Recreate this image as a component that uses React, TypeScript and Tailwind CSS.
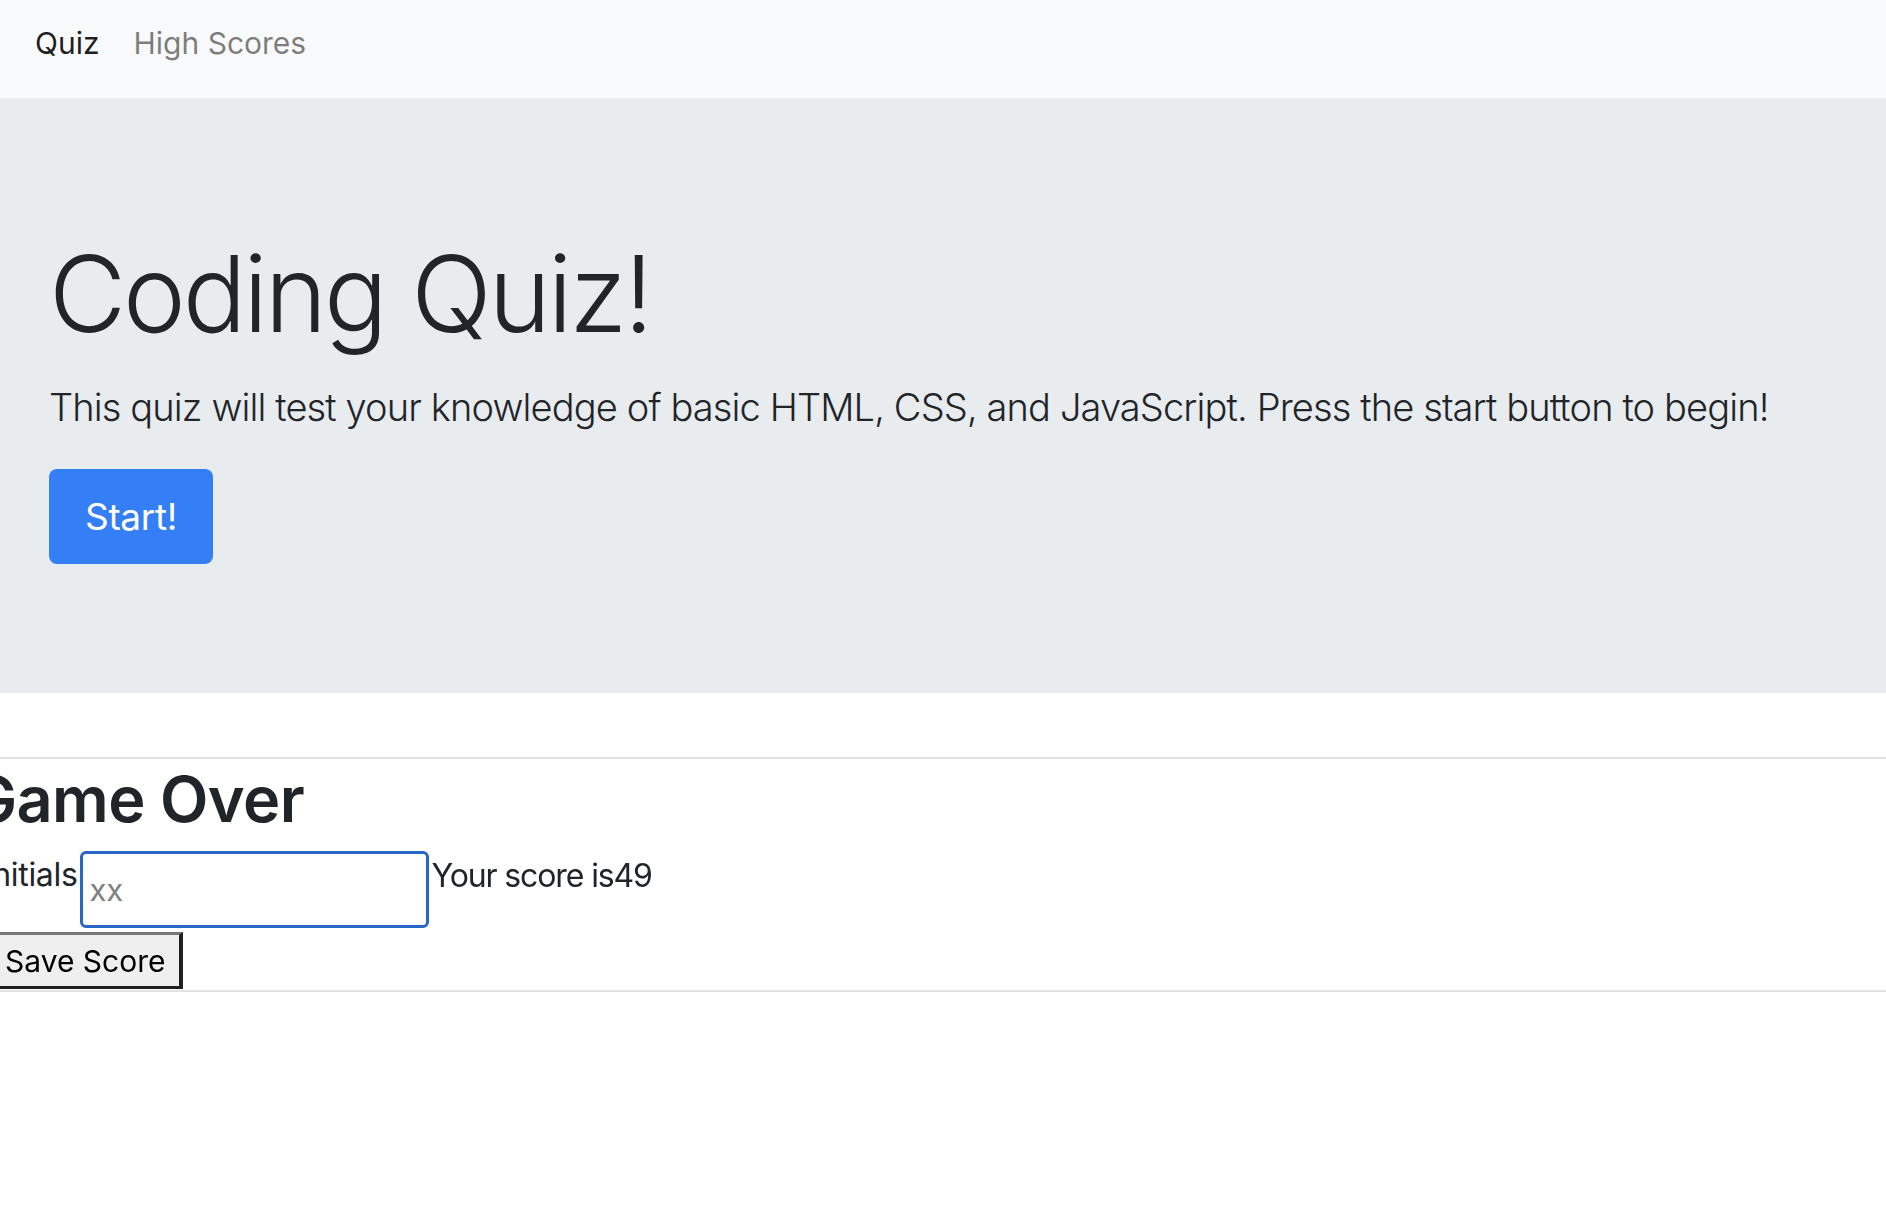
import { useState } from "react";

const font = { fontFamily: "Inter, 'Noto Sans', sans-serif" };

export default function App() {
  const [initials, setInitials] = useState("");

  return (
    <div className="min-h-screen overflow-hidden bg-white text-[#212529]" style={font}>
      {/* Navbar */}
      <nav className="flex h-[98px] items-start gap-[34px] bg-[#f8f9fa] pl-[35px] pt-[25px] text-[30px] leading-[36px]">
        <a href="#quiz" className="text-black/90">
          Quiz
        </a>
        <a href="#scores" className="text-black/50">
          High Scores
        </a>
      </nav>

      {/* Jumbotron */}
      <section className="bg-[#e9ecef] pb-[129px] pl-[49px] pt-[127px]">
        <h1 className="text-[106px] font-light leading-[138px] tracking-[-0.03em]">Coding Quiz!</h1>
        <p className="mt-[14px] whitespace-nowrap text-[38px] font-light leading-[60px] tracking-[-0.023em]">
          This quiz will test your knowledge of basic HTML, CSS, and JavaScript. Press the start button to begin!
        </p>
        <button className="mt-[32px] h-[95px] w-[164px] rounded-[8px] bg-[#347ef6] text-[37px] tracking-[-0.01em] text-white">
          Start!
        </button>
      </section>

      {/* Game over */}
      <div className="mt-[64px] h-[2px] bg-[#e2e2e2]" />
      <section>
        <h1 className="-ml-[30px] text-[63px] font-semibold leading-[80px] tracking-[-0.01em]">Game Over</h1>
        <div className="-ml-[16px] mt-[12px] flex items-start tracking-[-0.02em]">
          <label htmlFor="initials" className="mt-[4px] text-[32px] leading-[40px]">
            Initials
          </label>
          <input
            id="initials"
            autoFocus
            value={initials}
            onChange={(e) => setInitials(e.target.value)}
            placeholder="xx"
            className="ml-[2px] h-[77px] w-[349px] rounded-[6px] border-[3px] border-[#2866c9] bg-white pl-[7px] text-[31px] text-black caret-black outline-none placeholder:text-[#808080]"
          />
          <span className="ml-[3px] mt-[5px] text-[32px] leading-[40px] tracking-[-0.035em]">Your score is49</span>
        </div>
        <button className="-ml-[11px] mt-[4px] h-[57px] border-[3px] border-b-[#1f1f1f] border-l-[#767676] border-r-[#1f1f1f] border-r-[4px] border-t-[#767676] bg-[#efefef] px-[13px] text-[30px] leading-none text-black">
          Save Score
        </button>
      </section>
      <div className="mt-[1px] h-[2px] bg-[#e2e2e2]" />
    </div>
  );
}
